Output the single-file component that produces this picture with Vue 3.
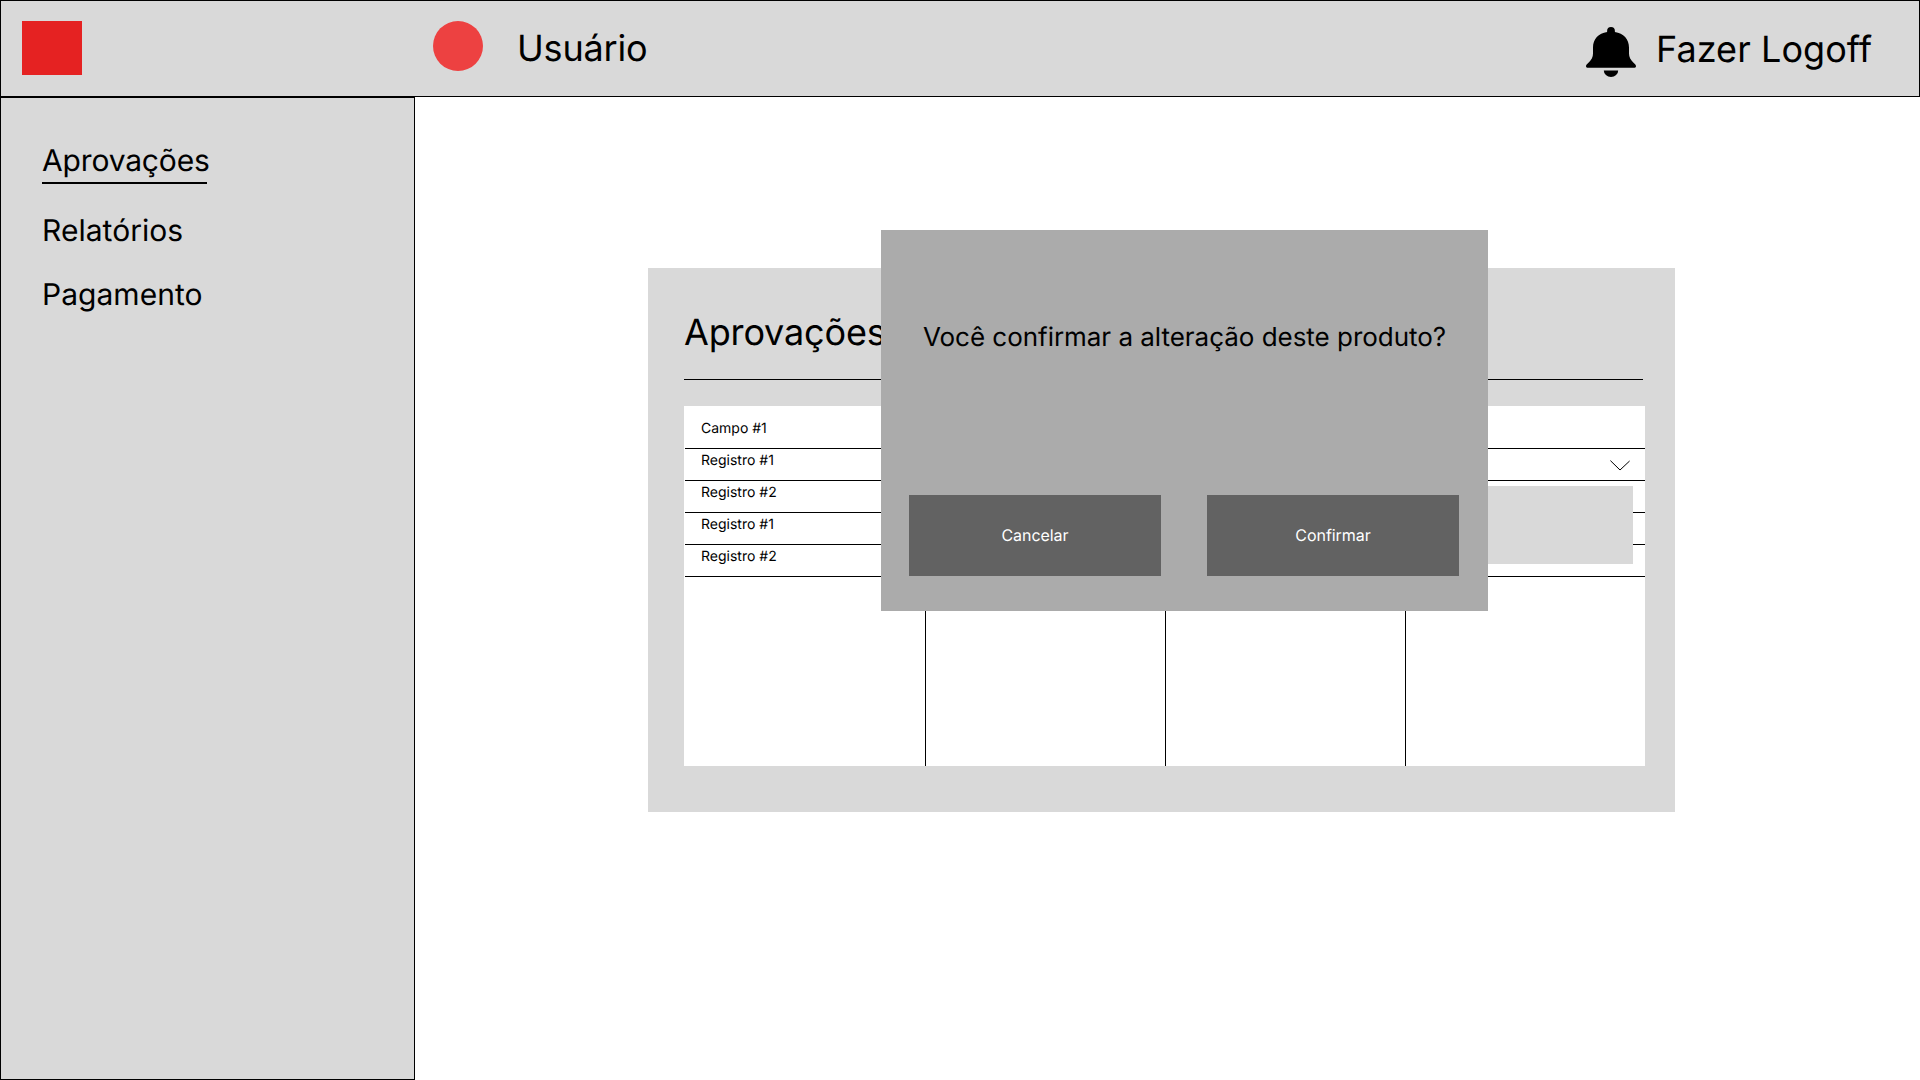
<script setup>
const menu = ['Aprovações', 'Relatórios', 'Pagamento']
const rows = ['Registro #1', 'Registro #2', 'Registro #1', 'Registro #2']
</script>

<template>
  <div class="page">
    <header class="topbar">
      <div class="logo"></div>
      <div class="avatar"></div>
      <span class="user">Usuário</span>
      <svg class="bell" viewBox="0 0 50 50">
        <path d="M25 0a3.900 3.900 0 0 1 3.900 3.900v1.200C37.500 6.200 43 12.300 43 20.500v6c0 3.500 1.500 6.500 5 9.700 1.300 1.200 2 1.900 2 3 0 1.100-1 1.600-2.400 1.600H2.400C1 40.800 0 40.300 0 39.200c0-1.100.7-1.800 2-3 3.600-3.200 5-6.200 5-9.700v-6C7 12.300 12.500 6.200 21.100 5.100V3.900A3.900 3.900 0 0 1 25 0z" />
        <path d="M17.800 43.500h14.400a7.200 6.500 0 0 1-14.400 0z" />
      </svg>
      <a class="logoff">Fazer Logoff</a>
    </header>
    <div class="body">
      <nav class="sidebar">
        <a v-for="(m, i) in menu" :key="m" class="item" :class="{ active: i === 0 }">{{ m }}</a>
      </nav>
      <main class="content">
        <section class="panel">
          <h1 class="title">Aprovações</h1>
          <div class="table">
            <div class="head">Campo #1</div>
            <div v-for="(r, i) in rows" :key="i" class="row">
              <span>{{ r }}</span>
              <svg v-if="i === 0" class="chevron" viewBox="0 0 20 11">
                <path d="M.4.6 10 10 19.600 1" fill="none" stroke="#000" />
              </svg>
            </div>
            <i v-for="n in 3" :key="n" class="col" :style="{ left: n * 240 + 1 + 'px' }"></i>
            <div class="dropdown"></div>
          </div>
        </section>
        <div class="modal">
          <p class="question">Você confirmar a alteração deste produto?</p>
          <div class="actions">
            <button>Cancelar</button>
            <button>Confirmar</button>
          </div>
        </div>
      </main>
    </div>
  </div>
</template>

<style>
body { margin: 0; }
</style>

<style scoped>
* { box-sizing: border-box; }
.page { width: 1920px; height: 1080px; display: flex; flex-direction: column; overflow: hidden; background: #fff; color: #000; font-family: Inter, sans-serif; font-weight: 400; text-rendering: geometricPrecision; }
.topbar { height: 97px; flex: none; display: flex; align-items: flex-start; background: #d9d9d9; border: 1px solid #000; padding: 20px 0 0 21px; }
.logo { width: 60px; height: 54px; background: #e52222; }
.avatar { width: 50px; height: 50px; margin-left: 351px; border-radius: 50%; background: #ed4141; }
.user { margin: 5px 0 0 34px; font-size: 36px; line-height: 44px; letter-spacing: -.18px; }
.bell { width: 50px; height: 50px; margin: 6px 0 0 auto; }
.logoff { width: 263px; margin: 6px 0 0 20px; font-size: 36px; line-height: 44px; letter-spacing: .06px; white-space: nowrap; }
.body { flex: 1; display: flex; min-height: 0; }
.sidebar { width: 415px; flex: none; display: flex; flex-direction: column; align-items: flex-start; background: #d9d9d9; border: 1px solid #000; padding: 44px 0 0 41px; }
.item { height: 36px; margin-bottom: 28px; font-size: 30px; line-height: 38px; letter-spacing: .03px; white-space: nowrap; }
.item.active { width: 165px; height: 42px; border-bottom: 2px solid #000; letter-spacing: -.16px; }
.content { flex: 1; position: relative; padding: 171px 0 0 233px; }
.panel { width: 1027px; height: 544px; background: #d9d9d9; padding: 42px 30px 0 36px; }
.title { width: 959px; height: 70px; margin: 0 0 26px; border-bottom: 1px solid #000; font-size: 36px; font-weight: 400; line-height: 44px; letter-spacing: -.15px; }
.table { position: relative; width: 961px; height: 360px; background: #fff; padding-left: 1px; }
.head, .row { display: flex; justify-content: space-between; padding-left: 16px; border-bottom: 1px solid #000; font-size: 14px; line-height: 17px; }
.head { height: 43px; padding-top: 14px; }
.row { height: 32px; padding-top: 3px; }
.chevron { width: 20px; height: 11px; margin: 8px 15px 0 0; }
.col { position: absolute; top: 0; width: 1px; height: 360px; background: #000; }
.dropdown { position: absolute; top: 80px; right: 12px; width: 220px; height: 78px; background: #d9d9d9; }
.modal { position: absolute; left: 466px; top: 133px; width: 607px; height: 381px; display: flex; flex-direction: column; justify-content: space-between; background: #ababab; padding: 92px 28px 35px; }
.question { margin: 0; font-size: 26px; line-height: 31px; letter-spacing: -.03px; text-align: center; white-space: nowrap; }
.actions { display: flex; justify-content: space-between; padding-right: 1px; }
button { width: 252px; height: 81px; border: 0; padding: 0 0 2px; background: #626262; color: #fff; font: 16px Inter, sans-serif; letter-spacing: -.05px; text-rendering: geometricPrecision; }
</style>
